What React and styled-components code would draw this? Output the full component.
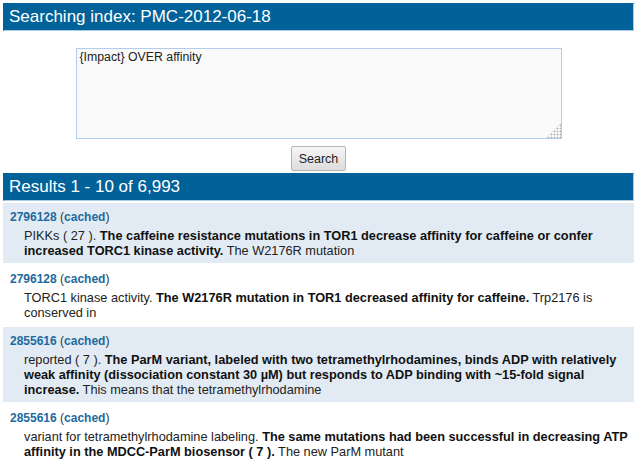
import React, { useEffect, useRef } from "react";
import styled, { createGlobalStyle } from "styled-components";

const Global = createGlobalStyle`
  html, body { margin: 0; padding: 0; background: #fff; }
  body { padding: 3px 6px 0 3px; font-family: "Liberation Sans", Arial, sans-serif; color: #222; }
`;

const Page = styled.div`
  display: flex;
  flex-direction: column;
`;

const Bar = styled.h1`
  margin: 0;
  height: 26px;
  display: flex;
  align-items: center;
  padding: 0 5px;
  background: #01629a;
  border: 1px solid #a9cbe6;
  border-top-color: #01629a;
  border-left-color: #01629a;
  color: #fff;
  font-weight: normal;
  font-size: 17px;
`;

const Form = styled.form`
  display: flex;
  flex-direction: column;
  align-items: center;
  padding: 17px 0 2px;
  gap: 7px;
`;

const Query = styled.textarea`
  box-sizing: border-box;
  width: 486px;
  height: 91px;
  margin: 0;
  padding: 1px 3px;
  border: 1px solid #b3cdef;
  background: #fafafa;
  font-family: "Liberation Sans", Arial, sans-serif;
  font-size: 12.3px;
  color: #222;
  caret-color: #111;
  resize: both;
  outline: none;
  &::-webkit-resizer {
    background:
      linear-gradient(to bottom right, #fafafa 50%, transparent 50%),
      radial-gradient(circle, #a8a8a8 0.8px, transparent 1.1px) 1px 1px / 3px 3px;
  }
`;

const Button = styled.button`
  box-sizing: border-box;
  width: 55px;
  height: 25px;
  padding: 0;
  border: 1px solid #b4b4b4;
  border-radius: 2px;
  background: linear-gradient(#f6f6f6, #dcdcdc);
  font-family: "Liberation Sans", Arial, sans-serif;
  font-size: 12.5px;
  color: #222;
`;

const Results = styled.section`
  display: flex;
  flex-direction: column;
`;

const Result = styled.div`
  padding: 7px 0 5px 7px;
  background: ${(p) => (p.$shaded ? "#e2ebf4" : "#fff")};
  margin-top: 2px;
`;

const Head = styled.div`
  font-size: 12px;
  line-height: 15px;
  color: #333;
`;

const Link = styled.a`
  color: #1d6a9e;
  font-weight: bold;
  text-decoration: none;
`;

const Snippet = styled.p`
  margin: 3px 0 0 14px;
  font-size: 12.75px;
  line-height: 15px;
  color: #222;
  b { color: #111; }
`;

const data = [
  {
    id: "2796128",
    shaded: true,
    pre: "PIKKs ( 27 ). ",
    bold: "The caffeine resistance mutations in TOR1 decrease affinity for caffeine or confer increased TORC1 kinase activity.",
    post: " The W2176R mutation",
  },
  {
    id: "2796128",
    shaded: false,
    pre: "TORC1 kinase activity. ",
    bold: "The W2176R mutation in TOR1 decreased affinity for caffeine.",
    post: " Trp2176 is conserved in",
  },
  {
    id: "2855616",
    shaded: true,
    pre: "reported ( 7 ). ",
    bold: "The ParM variant, labeled with two tetramethylrhodamines, binds ADP with relatively weak affinity (dissociation constant 30 \u00b5M) but responds to ADP binding with ~15-fold signal increase.",
    post: " This means that the tetramethylrhodamine",
  },
  {
    id: "2855616",
    shaded: false,
    pre: "variant for tetramethylrhodamine labeling. ",
    bold: "The same mutations had been successful in decreasing ATP affinity in the MDCC-ParM biosensor ( 7 ).",
    post: " The new ParM mutant",
  },
];

export default function App() {
  const ref = useRef(null);
  useEffect(() => {
    const el = ref.current;
    if (el) {
      el.focus();
      const n = el.value.length;
      el.setSelectionRange(n, n);
    }
  }, []);
  return (
    <>
      <Global />
      <Page>
        <Bar>Searching index: PMC-2012-06-18</Bar>
        <Form onSubmit={(e) => e.preventDefault()}>
          <Query ref={ref} defaultValue="{Impact} OVER affinity" />
          <Button type="submit">Search</Button>
        </Form>
        <Bar as="h2">Results 1 - 10 of 6,993</Bar>
        <Results>
          {data.map((r, i) => (
            <Result key={i} $shaded={r.shaded}>
              <Head>
                <Link href="#">{r.id}</Link> (<Link href="#">cached</Link>)
              </Head>
              <Snippet>
                {r.pre}
                <b>{r.bold}</b>
                {r.post}
              </Snippet>
            </Result>
          ))}
        </Results>
      </Page>
    </>
  );
}
